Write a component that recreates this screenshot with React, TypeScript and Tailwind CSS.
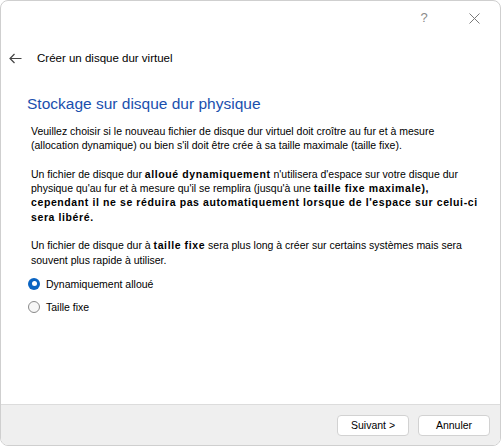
import React from "react";

const font = { fontFamily: '"Liberation Sans", Arial, sans-serif' };

function B({ children }: { children: React.ReactNode }) {
  return <b className="font-bold tracking-[0.6px]">{children}</b>;
}

export default function App() {
  return (
    <div
      className="w-[501px] h-[446px] bg-white border border-[#cfcfcf] rounded-[8px] overflow-hidden flex flex-col text-black"
      style={font}
    >
      <div className="h-[34px] flex items-center justify-end shrink-0">
        <span className="text-[13px] text-[#8a8a8a] w-[14px] text-center mr-[38px]">?</span>
        <svg width="11" height="11" viewBox="0 0 11 11" className="mr-[20px]">
          <path d="M0.5 0.5L10.5 10.5M10.5 0.5L0.5 10.5" stroke="#7a7a7a" strokeWidth="1" />
        </svg>
      </div>
      <div className="h-[46px] flex items-center shrink-0">
        <svg width="13" height="11" viewBox="0 0 13 11" className="ml-[8px]">
          <path d="M12.5 5.5H1M5.5 1L1 5.5L5.5 10" stroke="#444" strokeWidth="1.2" fill="none" />
        </svg>
        <span className="ml-[15px] text-[11.5px] leading-[15px]">Créer un disque dur virtuel</span>
      </div>
      <div className="pl-[30px] flex flex-col text-[10.5px] leading-[14.33px]">
        <div className="-ml-[4px] mt-[13px] text-[15.5px] leading-[20px] text-[#1a4fae]">
          Stockage sur disque dur physique
        </div>
        <div className="mt-[9.8px]">
          Veuillez choisir si le nouveau fichier de disque dur virtuel doit croître au fur et à mesure
          <br />
          (allocation dynamique) ou bien s'il doit être crée à sa taille maximale (taille fixe).
        </div>
        <div className="mt-[14.33px]">
          Un fichier de disque dur <B>alloué dynamiquement</B> n'utilisera d'espace sur votre disque dur
          <br />
          physique qu'au fur et à mesure qu'il se remplira (jusqu'à une <B>taille fixe maximale),</B>
          <br />
          <B>cependant il ne se réduira pas automatiquement lorsque de l'espace sur celui-ci</B>
          <br />
          <B>sera libéré.</B>
        </div>
        <div className="mt-[14.33px]">
          Un fichier de disque dur à <B>taille fixe</B> sera plus long à créer sur certains systèmes mais sera
          <br />
          souvent plus rapide à utiliser.
        </div>
        <div className="mt-[7.7px] h-[18px] flex items-center -ml-[3px]">
          <span className="w-[12px] h-[12px] rounded-full bg-[#0a64c2] flex items-center justify-center">
            <span className="w-[5px] h-[5px] rounded-full bg-white" />
          </span>
          <span className="ml-[6px]">Dynamiquement alloué</span>
        </div>
        <div className="mt-[5px] h-[18px] flex items-center -ml-[3px]">
          <span className="w-[12px] h-[12px] rounded-full border border-[#8a8a8a] bg-[#f7f7f7]" />
          <span className="ml-[6px]">Taille fixe</span>
        </div>
      </div>
      <div className="flex-1" />
      <div className="h-[41px] shrink-0 bg-[#efefef] border-t border-[#dcdcdc] flex items-center justify-end gap-[9px] pr-[10px]">
        <button className="w-[72px] h-[21px] bg-white border border-[#d2d2d2] rounded-[4px] text-[10.5px] leading-none">
          Suivant &gt;
        </button>
        <button className="w-[72px] h-[21px] bg-white border border-[#d2d2d2] rounded-[4px] text-[10.5px] leading-none">
          Annuler
        </button>
      </div>
    </div>
  );
}
